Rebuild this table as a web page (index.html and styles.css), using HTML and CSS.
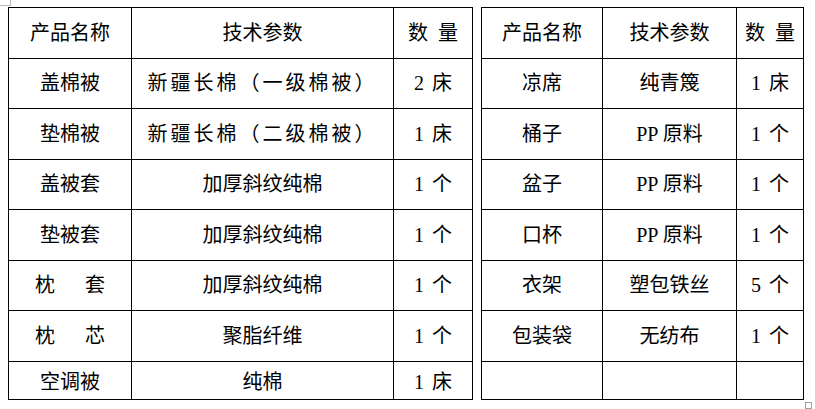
FILE: index.html
```html
<!DOCTYPE html>
<html lang="zh-CN">
<head>
<meta charset="utf-8">
<title>产品清单</title>
<link rel="stylesheet" href="styles.css">
</head>
<body>
<div class="page">
  <span class="mark-tl"></span>
  <table class="spec spec-left">
    <colgroup><col class="l-name"><col class="l-param"><col class="l-qty"></colgroup>
    <tr><th>产品名称</th><th>技术参数</th><th>数&ensp;量</th></tr>
    <tr><td>盖棉被</td><td class="wide">新疆长棉（一级棉被）</td><td class="qty">2 床</td></tr>
    <tr><td>垫棉被</td><td class="wide">新疆长棉（二级棉被）</td><td class="qty">1 床</td></tr>
    <tr><td>盖被套</td><td>加厚斜纹纯棉</td><td class="qty">1 个</td></tr>
    <tr><td>垫被套</td><td>加厚斜纹纯棉</td><td class="qty">1 个</td></tr>
    <tr><td>枕&emsp;&ensp;套</td><td>加厚斜纹纯棉</td><td class="qty">1 个</td></tr>
    <tr><td>枕&emsp;&ensp;芯</td><td>聚脂纤维</td><td class="qty">1 个</td></tr>
    <tr class="last"><td>空调被</td><td>纯棉</td><td class="qty">1 床</td></tr>
  </table>
  <table class="spec spec-right">
    <colgroup><col class="r-name"><col class="r-param"><col class="r-qty"></colgroup>
    <tr><th>产品名称</th><th>技术参数</th><th>数&ensp;量</th></tr>
    <tr><td>凉席</td><td>纯青篾</td><td class="qty">1 床</td></tr>
    <tr><td>桶子</td><td>PP 原料</td><td class="qty">1 个</td></tr>
    <tr><td>盆子</td><td>PP 原料</td><td class="qty">1 个</td></tr>
    <tr><td>口杯</td><td>PP 原料</td><td class="qty">1 个</td></tr>
    <tr><td>衣架</td><td>塑包铁丝</td><td class="qty">5 个</td></tr>
    <tr><td>包装袋</td><td>无纺布</td><td class="qty">1 个</td></tr>
    <tr class="last"><td></td><td></td><td></td></tr>
  </table>
  <span class="mark-end"></span>
</div>
</body>
</html>
```

FILE: styles.css
```css
html, body {
  margin: 0;
  padding: 0;
  background: #fff;
}

.page {
  position: relative;
  display: flex;
  align-items: flex-start;
  gap: 8px;
  padding: 7px 0 0 8px;
  width: 815px;
  height: 409px;
  box-sizing: border-box;
  font-family: "Liberation Serif", "Noto Sans CJK SC", serif;
  font-size: 20px;
  color: #000;
}

.spec {
  border-collapse: collapse;
  table-layout: fixed;
}

.spec-left { width: 464px; }
.spec-right { width: 322px; }

.l-name { width: 123px; }
.l-param { width: 262px; }
.l-qty { width: 79px; }

.r-name { width: 121px; }
.r-param { width: 134px; }
.r-qty { width: 67px; }

.spec th,
.spec td {
  border: 1px solid #000;
  height: 49.5px;
  padding: 0;
  text-align: center;
  vertical-align: middle;
  font-weight: normal;
  line-height: 24px;
  white-space: nowrap;
}

.spec .last td {
  height: 33px;
  padding-top: 4px;
}

.qty {
  word-spacing: 3px;
}

.wide {
  letter-spacing: 3px;
}

.mark-tl {
  position: absolute;
  left: 0;
  top: 0;
  width: 10px;
  height: 5px;
  border-right: 1px solid #b8b8b8;
  border-bottom: 1px solid #b8b8b8;
}

.mark-end {
  position: absolute;
  left: 805px;
  top: 402px;
  width: 5px;
  height: 5px;
  border: 1px solid #a0a0a0;
}
```
